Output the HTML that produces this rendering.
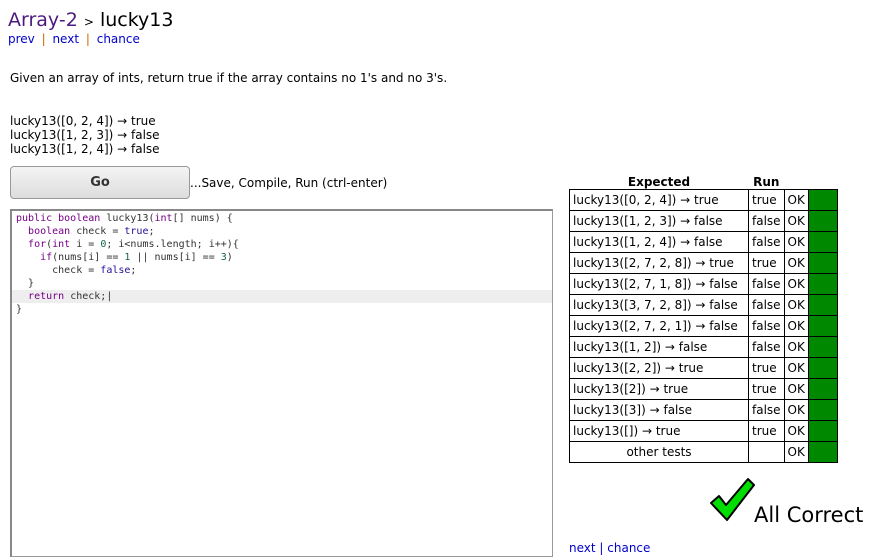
<!DOCTYPE html>
<html><head><style>
body{margin:0;width:874px;height:545px;overflow:hidden;background:#fff;font-family:"DejaVu Sans",Verdana,sans-serif;font-size:12px;color:#000;position:relative}
.a{position:absolute;white-space:nowrap}
#ed{position:absolute;left:10px;top:209px;width:540px;height:345px;border:1px solid #999;border-top:2px solid #888;border-left:2px solid #888;font-family:"DejaVu Sans Mono",monospace;font-size:10px;line-height:13px;color:#333}
#ed div{padding-left:4px;white-space:pre;height:13px}
.k{color:#708}.b{color:#219}.n{color:#164}
table{position:absolute;left:569px;top:175px;border-collapse:collapse;font-size:12px}
td{border:1px solid #000;height:20px;padding:0 3px;white-space:nowrap}
th{font-size:12px;height:14px;padding:0}
td.g{background:#080;width:22px}
</style></head><body>
<div class="a" style="left:8px;top:9px;font-size:19px"><span style="color:#4b1a80">Array-2</span> <span style="font-size:12px">&gt;</span> lucky13</div>
<div class="a" style="left:8px;top:32px;font-size:12px;color:#00c;word-spacing:3px">prev <span style="color:#c60">|</span> next <span style="color:#c60">|</span> chance</div>
<div class="a" style="left:10px;top:71px">Given an array of ints, return true if the array contains no 1's and no 3's.</div>
<div class="a" style="left:10px;top:114px;line-height:14px">lucky13([0, 2, 4]) → true<br>lucky13([1, 2, 3]) → false<br>lucky13([1, 2, 4]) → false</div>
<div class="a" style="left:10px;top:166px;width:178px;height:31px;border:1px solid #999;border-radius:4px;background:linear-gradient(#f4f4f4,#ddd);text-align:center;line-height:31px;font-weight:bold;font-size:13px;color:#333">Go</div>
<div class="a" style="left:190px;top:176px">...Save, Compile, Run (ctrl-enter)</div>
<div id="ed"><div style="margin-top:1px"><span class="k">public boolean</span> lucky13(<span class="k">int</span>[] nums) {</div><div>  <span class="k">boolean</span> check = <span class="b">true</span>;</div><div>  <span class="k">for</span>(<span class="k">int</span> i = <span class="n">0</span>; i&lt;nums.length; i++){</div><div>    <span class="k">if</span>(nums[i] == <span class="n">1</span> || nums[i] == <span class="n">3</span>)</div><div>      check = <span class="b">false</span>;</div><div>  }</div><div style="background:#eee">  <span class="k">return</span> check;|</div><div>}</div></div>
<table>
<tr><th>Expected</th><th>Run</th><th></th><th></th></tr>
<tr><td style="width:172px">lucky13([0, 2, 4]) → true</td><td>true</td><td>OK</td><td class="g"></td></tr>
<tr><td>lucky13([1, 2, 3]) → false</td><td>false</td><td>OK</td><td class="g"></td></tr>
<tr><td>lucky13([1, 2, 4]) → false</td><td>false</td><td>OK</td><td class="g"></td></tr>
<tr><td>lucky13([2, 7, 2, 8]) → true</td><td>true</td><td>OK</td><td class="g"></td></tr>
<tr><td>lucky13([2, 7, 1, 8]) → false</td><td>false</td><td>OK</td><td class="g"></td></tr>
<tr><td>lucky13([3, 7, 2, 8]) → false</td><td>false</td><td>OK</td><td class="g"></td></tr>
<tr><td>lucky13([2, 7, 2, 1]) → false</td><td>false</td><td>OK</td><td class="g"></td></tr>
<tr><td>lucky13([1, 2]) → false</td><td>false</td><td>OK</td><td class="g"></td></tr>
<tr><td>lucky13([2, 2]) → true</td><td>true</td><td>OK</td><td class="g"></td></tr>
<tr><td>lucky13([2]) → true</td><td>true</td><td>OK</td><td class="g"></td></tr>
<tr><td>lucky13([3]) → false</td><td>false</td><td>OK</td><td class="g"></td></tr>
<tr><td>lucky13([]) → true</td><td>true</td><td>OK</td><td class="g"></td></tr>
<tr><td style="text-align:center">other tests</td><td></td><td>OK</td><td class="g"></td></tr>
</table>
<svg class="a" style="left:708px;top:476px" width="48" height="48" viewBox="0 0 48 48"><path d="M3 27 L11 20 L18 29 L40 3 L46 9 L19 44 Z" fill="#0d0" stroke="#000" stroke-width="2" stroke-linejoin="round"/></svg>
<div class="a" style="left:754px;top:503px;font-size:21px">All Correct</div>
<div class="a" style="left:569px;top:541px;color:#00c">next | chance</div>
</body></html>
